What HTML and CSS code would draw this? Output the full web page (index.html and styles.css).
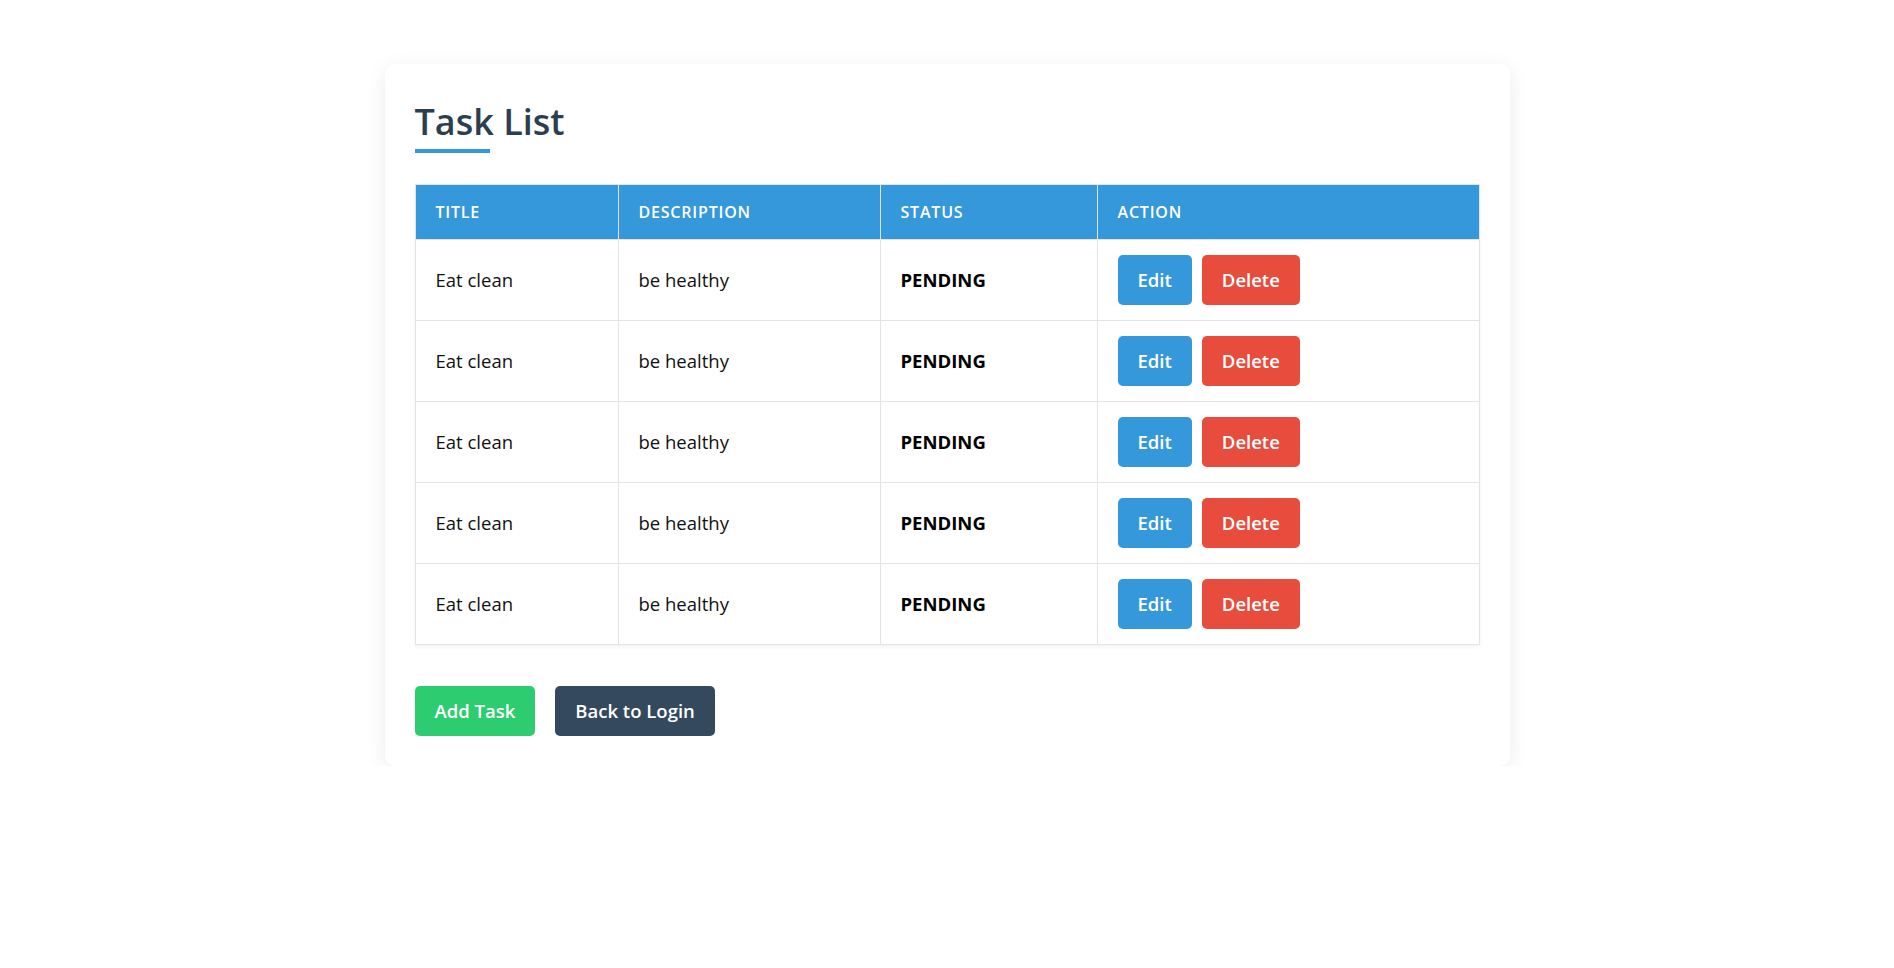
FILE: index.html
```html
<!DOCTYPE html>
<html lang="en">
<head>
<meta charset="utf-8">
<title>Task List</title>
<link rel="stylesheet" href="styles.css">
</head>
<body>
<div class="card">
  <h1 class="page-title">Task List</h1>
  <table class="task-table">
    <thead>
      <tr>
        <th class="col-title">Title</th>
        <th class="col-desc">Description</th>
        <th class="col-status">Status</th>
        <th class="col-action">Action</th>
      </tr>
    </thead>
    <tbody>
      <tr>
        <td>Eat clean</td>
        <td>be healthy</td>
        <td class="status">PENDING</td>
        <td><div class="actions"><button class="btn btn-edit">Edit</button><button class="btn btn-delete">Delete</button></div></td>
      </tr>
      <tr>
        <td>Eat clean</td>
        <td>be healthy</td>
        <td class="status">PENDING</td>
        <td><div class="actions"><button class="btn btn-edit">Edit</button><button class="btn btn-delete">Delete</button></div></td>
      </tr>
      <tr>
        <td>Eat clean</td>
        <td>be healthy</td>
        <td class="status">PENDING</td>
        <td><div class="actions"><button class="btn btn-edit">Edit</button><button class="btn btn-delete">Delete</button></div></td>
      </tr>
      <tr>
        <td>Eat clean</td>
        <td>be healthy</td>
        <td class="status">PENDING</td>
        <td><div class="actions"><button class="btn btn-edit">Edit</button><button class="btn btn-delete">Delete</button></div></td>
      </tr>
      <tr>
        <td>Eat clean</td>
        <td>be healthy</td>
        <td class="status">PENDING</td>
        <td><div class="actions"><button class="btn btn-edit">Edit</button><button class="btn btn-delete">Delete</button></div></td>
      </tr>
    </tbody>
  </table>
  <div class="footer-actions">
    <button class="btn btn-add">Add Task</button>
    <button class="btn btn-back">Back to Login</button>
  </div>
</div>
</body>
</html>
```
FILE: styles.css
```css
* { box-sizing: border-box; }

html, body {
  margin: 0;
  padding: 0;
  background: #ffffff;
}

body {
  font-family: "Open Sans", "Noto Sans", "Liberation Sans", sans-serif;
  color: #111;
  padding-top: 64px;
}

.card {
  width: 1125px;
  margin: 0 auto;
  background: #fff;
  border-radius: 10px;
  box-shadow: 0 4px 20px rgba(0, 0, 0, 0.08);
  padding: 30px;
}

.page-title {
  margin: 0 0 31px 0;
  padding-top: 3px;
  font-size: 36px;
  line-height: 50px;
  font-weight: 600;
  color: #2c3e50;
}

.page-title::after {
  content: "";
  display: block;
  width: 75px;
  height: 4px;
  margin-top: 2px;
  background: #3498db;
}

.task-table {
  width: 100%;
  border-collapse: collapse;
  box-shadow: 0 2px 4px rgba(0, 0, 0, 0.05);
}

.task-table th,
.task-table td {
  border: 1px solid #e1e4e9;
  text-align: left;
  padding: 15px 20px;
}

.task-table th {
  background: #3498db;
  color: #fff;
  font-size: 16px;
  font-weight: 600;
  text-transform: uppercase;
  letter-spacing: 0.8px;
  line-height: 24px;
}

.task-table td {
  font-size: 18.5px;
  line-height: 50px;
  height: 81px;
  padding-top: 15px;
  padding-bottom: 15px;
}

.col-title { width: 203px; }
.col-desc { width: 262px; }
.col-status { width: 217px; }

.task-table td.status {
  font-weight: 700;
  color: #000;
}

.actions {
  display: flex;
  gap: 10px;
}

.btn {
  font-family: inherit;
  font-size: 18.5px;
  font-weight: 600;
  color: #fff;
  border: none;
  border-radius: 5px;
  height: 50px;
  padding: 0 20px;
  line-height: 50px;
  cursor: pointer;
}

.btn-edit { background: #3498db; }
.btn-delete { background: #e74c3c; }
.btn-add { background: #2ecc71; }
.btn-back { background: #34495e; }

.footer-actions {
  display: flex;
  gap: 20px;
  margin-top: 41px;
}
```
